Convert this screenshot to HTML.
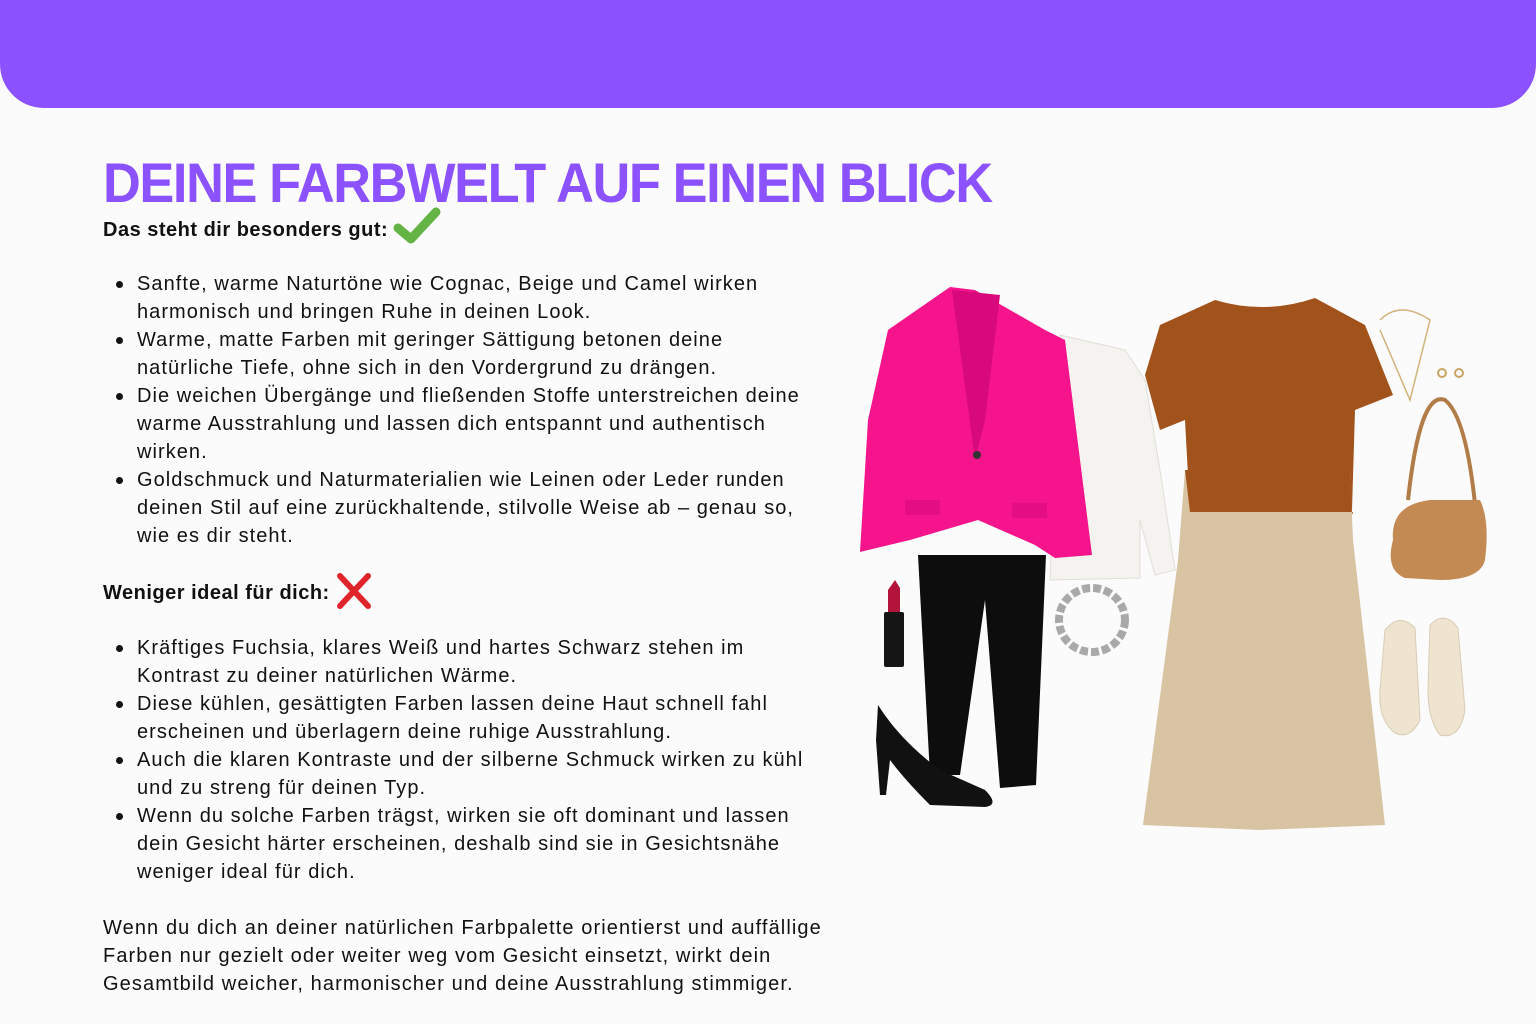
<!DOCTYPE html>
<html><head><meta charset="utf-8"><style>
*{margin:0;padding:0;box-sizing:border-box}
body{width:1536px;height:1024px;overflow:hidden;background:#fbfbfb;font-family:"Liberation Sans",sans-serif;color:#111;position:relative}
.bar{position:absolute;left:0;top:0;width:1536px;height:108px;background:#8c52ff;border-radius:0 0 44px 44px}
h1{position:absolute;left:103px;top:150px;font-size:56px;font-weight:bold;color:#8c52ff;letter-spacing:-1.5px;white-space:nowrap;transform-origin:left;transform:scaleX(0.935)}
.h{position:absolute;left:103px;font-size:20px;font-weight:bold;letter-spacing:0.5px}
ul{position:absolute;left:137px;width:684px;list-style:none;font-size:20px;line-height:28px;letter-spacing:1.05px}
li{position:relative}
li:before{content:"";position:absolute;left:-21px;top:11px;width:7px;height:7px;border-radius:50%;background:#111}
p{position:absolute;left:103px;top:914px;width:740px;font-size:20px;line-height:28px;letter-spacing:1.1px}
</style></head><body>
<div class="bar"></div>
<h1>DEINE FARBWELT AUF EINEN BLICK</h1>
<div class="h" style="top:206px">Das steht dir besonders gut: <svg width="50" height="40" style="vertical-align:-10px;margin-left:-2px" viewBox="0 0 50 40"><path d="M6 22 L19 33 L44 6" fill="none" stroke="#64b345" stroke-width="9" stroke-linecap="round" stroke-linejoin="round"/></svg></div>
<ul style="top:270px">
<li>Sanfte, warme Naturtöne wie Cognac, Beige und Camel wirken harmonisch und bringen Ruhe in deinen Look.</li>
<li>Warme, matte Farben mit geringer Sättigung betonen deine natürliche Tiefe, ohne sich in den Vordergrund zu drängen.</li>
<li>Die weichen Übergänge und fließenden Stoffe unterstreichen deine warme Ausstrahlung und lassen dich entspannt und authentisch wirken.</li>
<li>Goldschmuck und Naturmaterialien wie Leinen oder Leder runden deinen Stil auf eine zurückhaltende, stilvolle Weise ab – genau so, wie es dir steht.</li>
</ul>
<div class="h" style="top:571px">Weniger ideal für dich: <svg width="40" height="40" style="vertical-align:-12px;margin-left:-2px" viewBox="0 0 40 40"><path d="M6 5 L34 35 M34 5 L6 35" stroke="#e0242b" stroke-width="6" stroke-linecap="round"/></svg></div>
<ul style="top:634px">
<li>Kräftiges Fuchsia, klares Weiß und hartes Schwarz stehen im Kontrast zu deiner natürlichen Wärme.</li>
<li>Diese kühlen, gesättigten Farben lassen deine Haut schnell fahl erscheinen und überlagern deine ruhige Ausstrahlung.</li>
<li>Auch die klaren Kontraste und der silberne Schmuck wirken zu kühl und zu streng für deinen Typ.</li>
<li>Wenn du solche Farben trägst, wirken sie oft dominant und lassen dein Gesicht härter erscheinen, deshalb sind sie in Gesichtsnähe weniger ideal für dich.</li>
</ul>
<p>Wenn du dich an deiner natürlichen Farbpalette orientierst und auffällige Farben nur gezielt oder weiter weg vom Gesicht einsetzt, wirkt dein Gesamtbild weicher, harmonischer und deine Ausstrahlung stimmiger.</p>
<svg style="position:absolute;left:0;top:0" width="1536" height="1024">
<path d="M1060 335 L1125 350 L1145 380 L1160 470 L1175 570 L1155 575 L1140 520 L1140 578 L1050 580 L1060 335Z" fill="#f5f3ef" stroke="#e2ded8"/>
<path d="M918 555 L1046 555 L1036 785 L1000 788 L985 600 L960 775 L930 775 Z" fill="#0d0d0d"/>
<path d="M950 287 L975 290 L1045 330 L1065 340 L1075 420 L1092 555 L1055 558 L1035 545 L978 520 L910 540 L860 552 L868 420 L888 330 Z" fill="#f5148c"/>
<path d="M952 290 L1000 295 L985 420 L975 460 Z" fill="#d8097a"/>
<circle cx="977" cy="455" r="4" fill="#333"/>
<rect x="905" y="500" width="35" height="15" fill="#e40d82"/><rect x="1012" y="503" width="35" height="15" fill="#e40d82"/>
<path d="M878 705 Q900 740 940 770 L985 790 Q1000 805 985 807 L930 805 Q905 780 890 760 L886 795 L880 795 L876 740 Z" fill="#111"/>
<rect x="884" y="612" width="20" height="55" rx="2" fill="#151515"/><path d="M888 612 L888 590 L895 580 L900 588 L900 612Z" fill="#b3153a"/>
<ellipse cx="1092" cy="620" rx="33" ry="32" fill="none" stroke="#a9a9a9" stroke-width="8" stroke-dasharray="8 3"/>
<path d="M1215 300 Q1265 315 1315 298 L1365 325 L1393 395 L1355 410 L1352 510 L1190 512 L1185 420 L1160 430 L1145 375 L1160 325 Z" fill="#a2521b"/>
<path d="M1185 470 L1350 470 L1353 540 L1385 825 L1260 830 L1143 825 L1178 560 Z" fill="#d8c3a3"/>
<path d="M1185 470 L1350 470 L1352 515 L1353 512 L1190 512 Z" fill="#a2521b"/>
<path d="M1380 320 Q1400 300 1430 320 L1410 400 L1380 330" fill="none" stroke="#d2b27a" stroke-width="1.5"/>
<circle cx="1442" cy="373" r="4" fill="none" stroke="#c9a464" stroke-width="2"/><circle cx="1459" cy="373" r="4" fill="none" stroke="#c9a464" stroke-width="2"/>
<path d="M1408 500 Q1420 390 1445 400 Q1470 420 1478 540" fill="none" stroke="#b17c47" stroke-width="4"/>
<path d="M1393 540 Q1390 505 1430 500 L1480 500 Q1490 520 1485 560 Q1480 580 1440 580 L1405 578 Q1385 570 1393 540Z" fill="#c48a54"/>
<path d="M1385 630 Q1400 612 1415 628 L1420 720 Q1410 740 1395 733 Q1378 720 1380 690Z" fill="#efe4d0" stroke="#d9ccb4"/>
<path d="M1430 625 Q1445 610 1458 628 L1465 710 Q1460 740 1440 735 Q1428 720 1428 690Z" fill="#efe4d0" stroke="#d9ccb4"/>
</svg>
</body></html>
